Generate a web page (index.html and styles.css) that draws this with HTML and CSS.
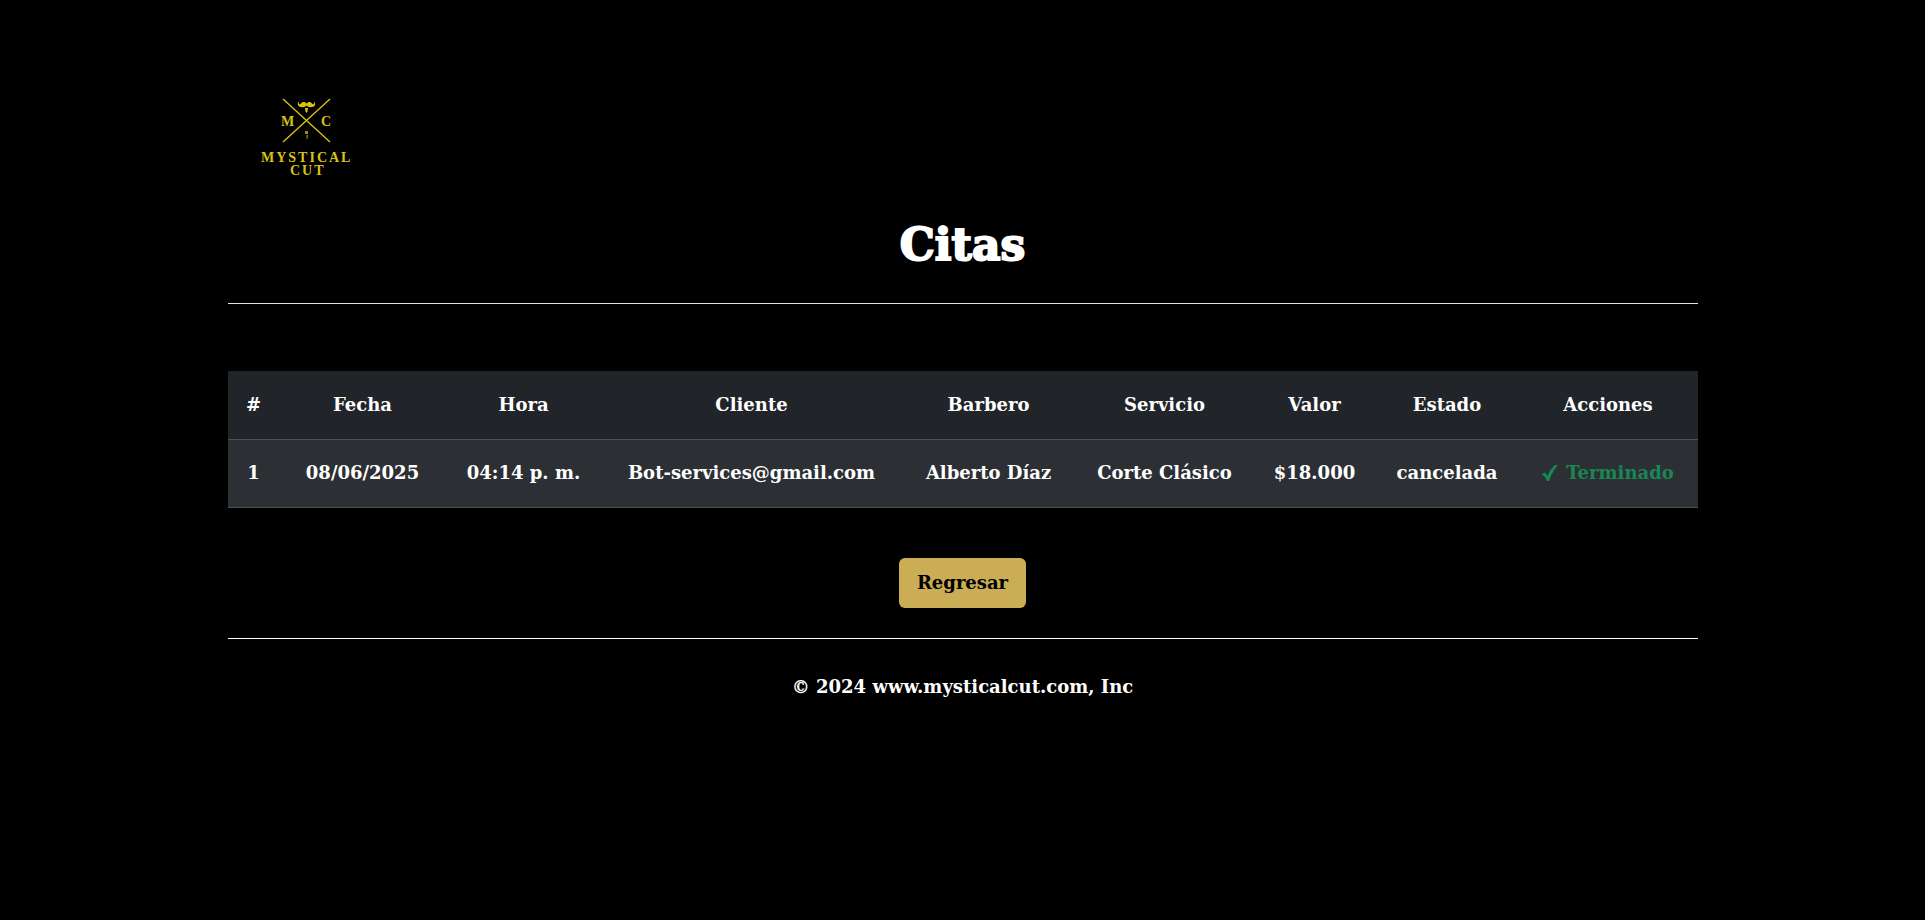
FILE: index.html
```html
<!DOCTYPE html>
<html lang="es">
<head>
<meta charset="utf-8">
<meta name="viewport" content="width=device-width, initial-scale=1">
<title>Citas</title>
<link rel="stylesheet" href="styles.css">
</head>
<body>
<div class="page">
  <header class="header">
    <svg class="logo" viewBox="0 0 156 110" role="img" aria-label="Mystical Cut">
      <path d="M55 19L102 62M102 19L55 62" stroke="#d9c310" stroke-width="1.4" fill="none"/>
      <path d="M78.500 23.500C76 21 74 22 73 23.500C72 25 70.500 24.500 71 21.500C69 23 69.500 27 73 27C75.500 27.500 77.500 27 78.500 25.500C79.500 27 81.500 27.500 84 27C87.500 27 88 23 86 21.500C86.500 24.500 85 25 84 23.500C83 22 81 21 78.500 23.500Z"/>
      <path d="M77 28H80L79.500 31.500L78.500 33L77.500 31.500Z"/>
      <path d="M77 51H80V54H77ZM78.500 55H80L79.500 59H78.500Z" opacity="0.700"/>
      <text class="logo-text" x="53" y="46">M</text>
      <text class="logo-text" x="93" y="46">C</text>
      <text class="logo-text logo-name" x="33" y="82">MYSTICAL</text>
      <text class="logo-text logo-name" x="62" y="95">CUT</text>
    </svg>
    <h1 class="title">Citas</h1>
  </header>
  <main class="content">
    <table class="table">
      <colgroup>
        <col class="col-num"><col class="col-date"><col class="col-time"><col class="col-client"><col class="col-barber"><col class="col-service"><col class="col-price"><col class="col-status"><col class="col-actions">
      </colgroup>
      <thead>
        <tr><th scope="col">#</th><th scope="col">Fecha</th><th scope="col">Hora</th><th scope="col">Cliente</th><th scope="col">Barbero</th><th scope="col">Servicio</th><th scope="col">Valor</th><th scope="col">Estado</th><th scope="col">Acciones</th></tr>
      </thead>
      <tbody>
        <tr><td>1</td><td>08/06/2025</td><td>04:14 p. m.</td><td>Bot-services@gmail.com</td><td>Alberto Díaz</td><td>Corte Clásico</td><td>$18.000</td><td>cancelada</td>
          <td><span class="done"><svg class="check" viewBox="0 0 16 18" aria-hidden="true"><path d="M0 10L3 8.500L5.500 12Q8 5 13 1L16 1Q10 8 7 17H5Q3 12 0 10Z"/></svg>Terminado</span></td></tr>
      </tbody>
    </table>
    <button class="back" type="button">Regresar</button>
  </main>
  <footer class="footer">© 2024 www.mysticalcut.com, Inc</footer>
</div>
</body>
</html>
```
FILE: styles.css
```css
* { box-sizing: border-box; }
body {
  margin: 0;
  background: #000;
  color: #fff;
  font: bold 18px/28px "DejaVu Serif", serif;
}
.page { max-width: 1470px; margin: 0 auto; padding: 80px 0; }
.header { border-bottom: 1px solid #dee2e6; padding-bottom: 29px; }
.logo { display: block; width: 156px; height: 110px; fill: #d9c310; }
.logo-text { font: bold 14px "Liberation Serif", serif; }
.logo-name { letter-spacing: 2px; }
.title {
  margin: 26px 0 0;
  font-size: 44px;
  line-height: 58px;
  text-align: center;
  -webkit-text-stroke: 2px #fff;
}
.content {
  display: flex;
  flex-direction: column;
  align-items: center;
  gap: 50px;
  padding: 67px 0 30px;
  border-bottom: 1px solid #fff;
}
.table { width: 100%; border-collapse: collapse; table-layout: fixed; background: #212529; }
.table th, .table td {
  height: 68px;
  padding: 0;
  border-bottom: 1px solid #4d5154;
  text-align: center;
  vertical-align: middle;
  white-space: nowrap;
}
.table td { background: #2c3034; }
.col-num { width: 52px; }
.col-date { width: 166px; }
.col-time { width: 156px; }
.col-client { width: 300px; }
.col-barber { width: 174px; }
.col-service { width: 178px; }
.col-price { width: 122px; }
.col-status { width: 143px; }
.col-actions { width: 179px; }
.done { display: flex; align-items: center; justify-content: center; gap: 8px; color: #198754; }
.check { width: 16px; height: 18px; fill: currentColor; }
.back {
  padding: 11px 18px;
  border: 0;
  border-radius: 6px;
  background: #caad54;
  color: #000;
  font: inherit;
}
.footer { padding-top: 34px; text-align: center; }
```
